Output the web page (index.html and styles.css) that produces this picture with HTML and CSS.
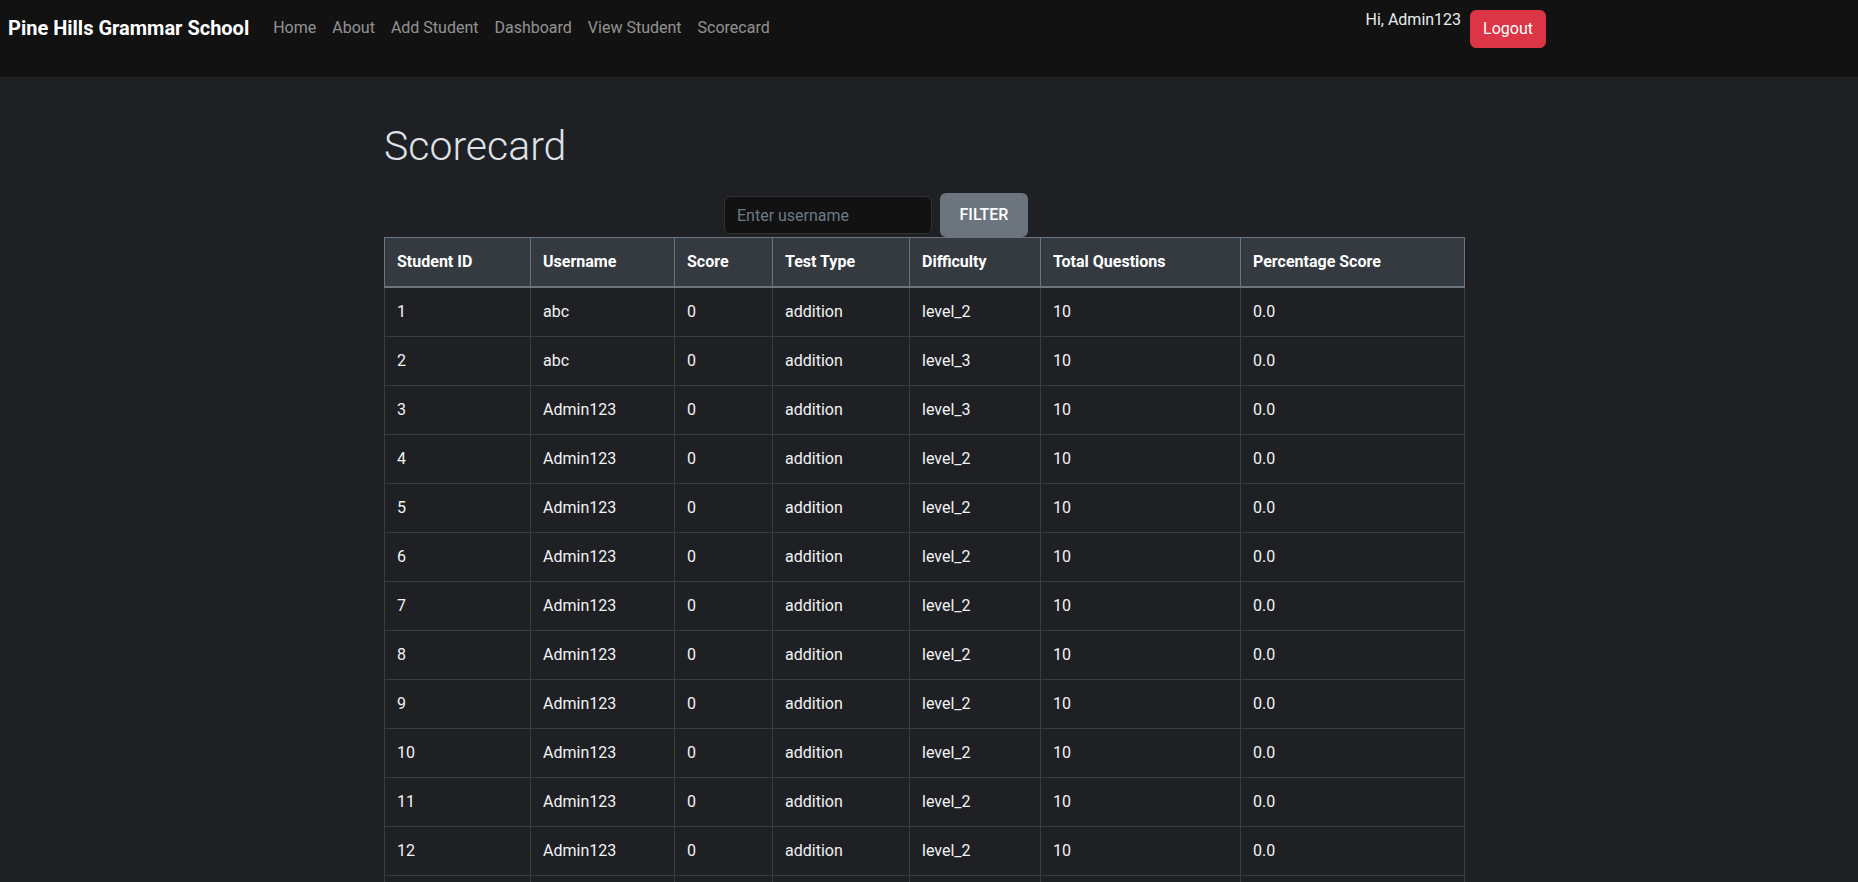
FILE: index.html
```html
<!DOCTYPE html>
<html lang="en">
<head>
<meta charset="utf-8">
<title>Scorecard</title>
<link rel="stylesheet" href="styles.css">
</head>
<body>
<nav class="navbar">
  <a class="brand" href="#">Pine Hills Grammar School</a>
  <ul class="nav-links">
    <li><a href="#">Home</a></li>
    <li><a href="#">About</a></li>
    <li><a href="#">Add Student</a></li>
    <li><a href="#">Dashboard</a></li>
    <li><a href="#">View Student</a></li>
    <li><a href="#">Scorecard</a></li>
  </ul>
  <div class="user-area">
    <span class="greeting">Hi, Admin123</span>
    <button class="btn-logout" type="button">Logout</button>
  </div>
</nav>

<main class="container">
  <h1 class="page-title">Scorecard</h1>
  <form class="filter-form">
    <input class="filter-input" type="text" placeholder="Enter username">
    <button class="btn-filter" type="button">Filter</button>
  </form>
  <table class="score-table">
    <colgroup>
      <col class="c-id"><col class="c-user"><col class="c-score"><col class="c-type"><col class="c-diff"><col class="c-total"><col class="c-pct">
    </colgroup>
    <thead>
      <tr><th>Student ID</th><th>Username</th><th>Score</th><th>Test Type</th><th>Difficulty</th><th>Total Questions</th><th>Percentage Score</th></tr>
    </thead>
    <tbody>
      <tr><td>1</td><td>abc</td><td>0</td><td>addition</td><td>level_2</td><td>10</td><td>0.0</td></tr>
      <tr><td>2</td><td>abc</td><td>0</td><td>addition</td><td>level_3</td><td>10</td><td>0.0</td></tr>
      <tr><td>3</td><td>Admin123</td><td>0</td><td>addition</td><td>level_3</td><td>10</td><td>0.0</td></tr>
      <tr><td>4</td><td>Admin123</td><td>0</td><td>addition</td><td>level_2</td><td>10</td><td>0.0</td></tr>
      <tr><td>5</td><td>Admin123</td><td>0</td><td>addition</td><td>level_2</td><td>10</td><td>0.0</td></tr>
      <tr><td>6</td><td>Admin123</td><td>0</td><td>addition</td><td>level_2</td><td>10</td><td>0.0</td></tr>
      <tr><td>7</td><td>Admin123</td><td>0</td><td>addition</td><td>level_2</td><td>10</td><td>0.0</td></tr>
      <tr><td>8</td><td>Admin123</td><td>0</td><td>addition</td><td>level_2</td><td>10</td><td>0.0</td></tr>
      <tr><td>9</td><td>Admin123</td><td>0</td><td>addition</td><td>level_2</td><td>10</td><td>0.0</td></tr>
      <tr><td>10</td><td>Admin123</td><td>0</td><td>addition</td><td>level_2</td><td>10</td><td>0.0</td></tr>
      <tr><td>11</td><td>Admin123</td><td>0</td><td>addition</td><td>level_2</td><td>10</td><td>0.0</td></tr>
      <tr><td>12</td><td>Admin123</td><td>0</td><td>addition</td><td>level_2</td><td>10</td><td>0.0</td></tr>
      <tr><td>13</td><td>Admin123</td><td>0</td><td>addition</td><td>level_2</td><td>10</td><td>0.0</td></tr>
    </tbody>
  </table>
</main>
</body>
</html>
```

FILE: styles.css
```css
* {
  box-sizing: border-box;
}

html, body {
  margin: 0;
  padding: 0;
}

body {
  background: #1f2023;
  color: #dee2e6;
  font-family: Roboto, "Liberation Sans", Arial, sans-serif;
  font-size: 16px;
  line-height: 1.5;
  overflow-x: hidden;
}

.navbar {
  display: flex;
  align-items: flex-start;
  height: 77px;
  padding: 8px 312px 8px 8px;
  background: #121212;
}

.brand {
  font-size: 20px;
  font-weight: 700;
  line-height: 30px;
  padding: 5px 0;
  margin-right: 16px;
  color: #ffffff;
  text-decoration: none;
  white-space: nowrap;
}

.nav-links {
  display: flex;
  list-style: none;
  margin: 0;
  padding: 0;
}

.nav-links a {
  display: block;
  padding: 8px;
  line-height: 24px;
  color: rgba(255, 255, 255, 0.55);
  text-decoration: none;
}

.user-area {
  display: flex;
  align-items: flex-start;
  gap: 9px;
  margin-left: auto;
}

.greeting {
  line-height: 24px;
  color: #e9ecef;
}

.btn-logout {
  margin-top: 2px;
  height: 38px;
  padding: 6px 12px;
  font-family: inherit;
  font-size: 16px;
  line-height: 24px;
  color: #ffffff;
  background: #dc3545;
  border: 1px solid #dc3545;
  border-radius: 6px;
}

.container {
  width: 1080px;
  margin: 0 0 0 384px;
  padding-top: 45px;
}

.page-title {
  margin: 0;
  font-size: 41px;
  font-weight: 300;
  line-height: 48px;
  color: #dee2e6;
}

.filter-form {
  display: flex;
  align-items: center;
  gap: 8px;
  margin: 23px 0 0 340px;
  height: 44px;
}

.filter-input {
  width: 208px;
  height: 38px;
  padding: 6px 12px;
  font-family: inherit;
  font-size: 16px;
  color: #dee2e6;
  background: #121212;
  border: 1px solid #2e3236;
  border-radius: 6px;
}

.filter-input::placeholder {
  color: #6c7a86;
}

.btn-filter {
  width: 88px;
  height: 44px;
  padding: 10px 0;
  font-family: inherit;
  font-size: 16px;
  font-weight: 500;
  line-height: 24px;
  text-transform: uppercase;
  color: #ffffff;
  background: #6c757d;
  border: none;
  border-radius: 6px;
}

.score-table {
  width: 1080px;
  table-layout: fixed;
  border-collapse: collapse;
}

.c-id { width: 146px; }
.c-user { width: 144px; }
.c-score { width: 98px; }
.c-type { width: 137px; }
.c-diff { width: 131px; }
.c-total { width: 200px; }
.c-pct { width: 224px; }

.score-table th {
  height: 49px;
  padding: 12px;
  text-align: left;
  font-weight: 700;
  color: #ffffff;
  background: #343a40;
  border: 1px solid #6c757d;
  border-bottom-width: 2px;
}

.score-table td {
  height: 49px;
  padding: 12px;
  color: #f1f3f5;
  border: 1px solid #3a3c40;
}
```
